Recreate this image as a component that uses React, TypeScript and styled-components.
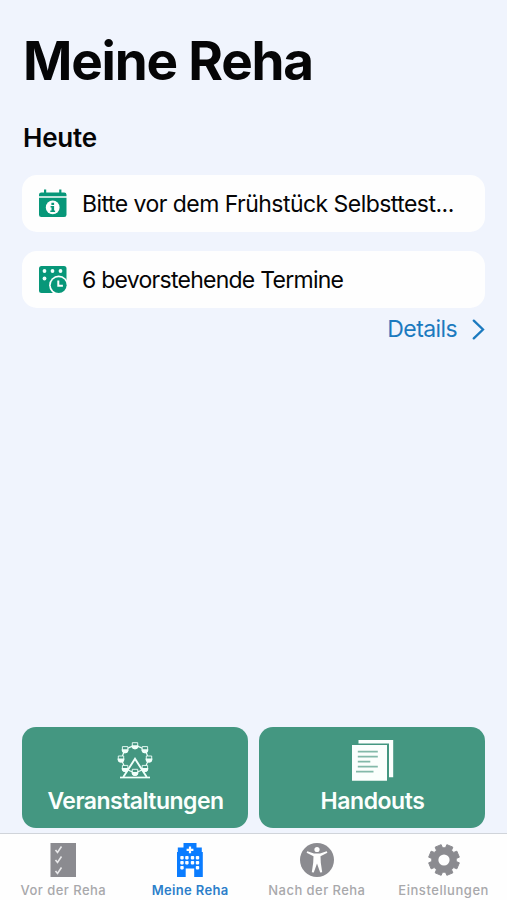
import React from "react";
import styled, { createGlobalStyle } from "styled-components";

const GlobalStyle = createGlobalStyle`
  * { box-sizing: border-box; }
  body { margin: 0; background: #f0f4fd; }
  button { border: 0; margin: 0; padding: 0; background: none; font: inherit; cursor: pointer; }
  svg { display: block; flex: none; }
`;

const Screen = styled.div`
  width: 100%;
  height: 900px;
  display: flex;
  flex-direction: column;
  overflow: hidden;
  background: #f0f4fd;
  color: #050506;
  font-family: Inter, "Liberation Sans", sans-serif;
`;

const Content = styled.main`
  flex: 1;
  display: flex;
  flex-direction: column;
  padding: 28px 22px 5px;
`;

const Title = styled.h1`
  margin: 0;
  padding: 1px 0 0 1px;
  font-size: 53px;
  line-height: 64px;
  font-weight: 700;
  letter-spacing: -1.2px;
`;

const Heading = styled.h2`
  margin: 29px 0 21px;
  padding-left: 1px;
  font-size: 26px;
  line-height: 32px;
  font-weight: 600;
  letter-spacing: -0.2px;
`;

const List = styled.div`
  display: flex;
  flex-direction: column;
  gap: 19px;
`;

const Row = styled.div`
  height: 57px;
  display: flex;
  align-items: center;
  gap: 15px;
  padding: 0 16px;
  border-radius: 15px;
  background: #fefefe;
`;

const RowText = styled.span<{ $spacing: number }>`
  font-size: 23px;
  line-height: 30px;
  letter-spacing: ${(p) => p.$spacing}px;
  white-space: nowrap;
`;

const Details = styled.button`
  align-self: flex-end;
  display: flex;
  align-items: center;
  gap: 15px;
  margin-top: 6px;
  color: #1c7abf;
  font-size: 23px;
  line-height: 30px;
  letter-spacing: -0.6px;
`;

const Tiles = styled.div`
  margin-top: auto;
  display: grid;
  grid-template-columns: 1fr 1fr;
  gap: 11px;
`;

const Tile = styled.button`
  height: 101px;
  display: flex;
  flex-direction: column;
  align-items: center;
  border-radius: 14px;
  background: #449781;
  color: #fbfffd;
`;

const TileIcon = styled.span`
  height: 59px;
  display: flex;
  padding-top: 13px;
`;

const TileLabel = styled.span<{ $spacing: number }>`
  padding-left: 1px;
  font-size: 23px;
  line-height: 30px;
  font-weight: 600;
  letter-spacing: ${(p) => p.$spacing}px;
`;

const TabBar = styled.nav`
  height: 67px;
  display: grid;
  grid-template-columns: repeat(4, 1fr);
  border-top: 1px solid #d0d4da;
  background: #fefefe;
`;

const Tab = styled.button<{ $active?: boolean }>`
  display: flex;
  flex-direction: column;
  align-items: center;
  padding-top: 8px;
  color: ${(p) => (p.$active ? "#0a7cff" : "#8b8b90")};
`;

const TabLabel = styled.span<{ $active?: boolean; $spacing: number }>`
  margin-top: 4px;
  font-size: 13px;
  line-height: 16px;
  font-weight: ${(p) => (p.$active ? 600 : 500)};
  letter-spacing: ${(p) => p.$spacing}px;
  color: ${(p) => (p.$active ? "#2c7fca" : "#a8a8ab")};
  white-space: nowrap;
`;

const green = "#079779";

const CalendarInfoIcon = () => (
  <svg width="29" height="29" viewBox="0 0 29 29">
    <path d="M1 7.300V5.800q0-2.300 2.300-2.300H6V.6h2.200v2.900h13V.6h2.200v2.900h2.800q2.300 0 2.300 2.300v1.500z" fill={green} />
    <path d="M1 8.800h27.500V25.700q0 2.300-2.300 2.300H3.300Q1 28 1 25.700z" fill={green} />
    <circle cx="14.700" cy="18.400" r="6.900" fill="#fefefe" />
    <path d="M13.400 13.800h2.700v2.300h-2.700zM12.600 17h3.500v4.500h1v1.400h-4.800v-1.400h1.200v-3.100h-.9z" fill={green} />
  </svg>
);

const CalendarClockIcon = () => (
  <svg width="29" height="29" viewBox="0 0 29 29">
    <rect x="1" y="1" width="27.500" height="27" rx="2.500" fill={green} />
    {[[6.500, 6], [14.500, 6], [22.500, 6], [6.500, 13.500]].map(([x, y]) => (
      <circle key={`${x}-${y}`} cx={x} cy={y} r="1.900" fill="#f2fffc" />
    ))}
    <circle cx="20.700" cy="20.200" r="9.600" fill="#fefefe" />
    <path d="M20 20h9v9h-9z" fill="#fefefe" />
    <circle cx="20.700" cy="20.200" r="7.900" fill={green} />
    <path d="M20.300 15.500v5.300h4.600" fill="none" stroke="#fefefe" strokeWidth="2" />
  </svg>
);

const ChevronIcon = () => (
  <svg width="13" height="21" viewBox="0 0 13 21">
    <path d="M1.800 1.600 11 10.500 1.800 19.400" fill="none" stroke="currentColor" strokeWidth="2.300" strokeLinecap="round" />
  </svg>
);

const cabins = Array.from({ length: 8 }, (_, i) => {
  const a = (i * Math.PI) / 4;
  return { x: 18 + 14 * Math.sin(a), y: 19 - 13.300 * Math.cos(a) };
});

const FerrisWheelIcon = () => (
  <svg width="36" height="40" viewBox="0 0 36 40" fill="none" stroke="#f0fffa">
    <circle cx="18" cy="19" r="12.800" strokeWidth="1.200" />
    {cabins.map(({ x, y }) => (
      <g key={`${x}-${y}`} transform={`translate(${x} ${y})`}>
        <path d="M-2.700-3h5.400V1q0 2-2 2h-1.400q-2 0-2-2z" fill="#449781" strokeWidth=".9" />
        <path d="M-3.400-.4h6.800q0 4-3.400 4T-3.400-.4z" fill="#f0fffa" stroke="none" />
      </g>
    ))}
    <path d="M6.300 37 18 18.800 29.700 37" strokeWidth="1.900" />
    <path d="M3 37.500h30" strokeWidth="1.700" />
  </svg>
);

const DocumentsIcon = () => (
  <svg width="43" height="43" viewBox="0 0 43 43">
    <path d="M7.500 0h34.700v37.300H7.500z" fill="#fbfffd" />
    <path d="M0 3.500h38v38H0z" fill="#449781" />
    <path d="M1 5h35v35.700H1z" fill="#fbfffd" />
    <path d="M6.800 11.700h20M6.800 16.700h20M6.800 21.700h12.500M6.800 26.700h20M5 31.700h17.500" stroke="#83b9a9" strokeWidth="1.800" />
  </svg>
);

const ChecklistIcon = () => (
  <svg width="36" height="36" viewBox="0 0 36 36">
    <path d="M5.500 1h25.500v34H5.500z" fill="currentColor" />
    <path d="m10.500 8 2 2.500 4-6M10.500 18l2 2.500 4-6M10.500 29l2 2.500 4-6" fill="none" stroke="#e8e8ea" strokeWidth="1.600" />
  </svg>
);

const HospitalIcon = () => (
  <svg width="36" height="36" viewBox="0 0 36 36">
    <path d="M11.500 1h13v4.500h5.300V10h1V35h-8.600v-8.500h-8.500V35H5V10h.8V5.500h5.700z" fill="currentColor" />
    <path d="M16.900 4.500h2.200v2.300h2.300V9h-2.300v2.300h-2.200V9h-2.300V6.800h2.300z" fill="#fefefe" />
    {[14, 19, 24].map((y) =>
      [8.300, 13.200, 18.800, 23.800].map((x, i) =>
        y === 24 && (i === 1 || i === 2) ? null : (
          <rect key={`${x}-${y}`} x={x} y={y} width="3.400" height="3.400" rx=".8" fill="#fefefe" />
        )
      )
    )}
  </svg>
);

const AccessibilityIcon = () => (
  <svg width="36" height="36" viewBox="0 0 36 36">
    <circle cx="18" cy="18" r="17" fill="currentColor" />
    <circle cx="18" cy="7.500" r="2.600" fill="#fefefe" />
    <path d="M8.300 9.200 15 11.600h6l6.700-2.400.7 1.500-6.900 3.600.3 6.500 1.400 9.400-2 .3-3.200-9.100-3.200 9.100-2-.3 1.400-9.400.3-6.500-6.900-3.600z" fill="#fefefe" />
  </svg>
);

const gearPath = Array.from({ length: 8 }, (_, i) => {
  const corners: [number, number][] = [[-15.500, 12.300], [-12, 15.600], [12, 15.600], [15.500, 12.300]];
  return corners
    .map(([offset, radius]) => {
      const a = ((i * 45 + 22.500 + offset) * Math.PI) / 180;
      return `${(18 + radius * Math.sin(a)).toFixed(2)} ${(18 - radius * Math.cos(a)).toFixed(2)}`;
    })
    .join("L");
}).join("L");

const GearIcon = () => (
  <svg width="36" height="36" viewBox="0 0 36 36">
    <path d={`M${gearPath}Z`} fill="currentColor" stroke="currentColor" strokeWidth="1" strokeLinejoin="round" />
    <circle cx="18" cy="18" r="5.600" fill="#fefefe" />
  </svg>
);

export default function App() {
  return (
    <Screen>
      <GlobalStyle />
      <Content>
        <Title>Meine Reha</Title>
        <Heading>Heute</Heading>
        <List>
          <Row>
            <CalendarInfoIcon />
            <RowText $spacing={-0.54}>Bitte vor dem Frühstück Selbsttest...</RowText>
          </Row>
          <Row>
            <CalendarClockIcon />
            <RowText $spacing={-0.74}>6 bevorstehende Termine</RowText>
          </Row>
        </List>
        <Details>
          Details
          <ChevronIcon />
        </Details>
        <Tiles>
          <Tile>
            <TileIcon><FerrisWheelIcon /></TileIcon>
            <TileLabel $spacing={-0.53}>Veranstaltungen</TileLabel>
          </Tile>
          <Tile>
            <TileIcon><DocumentsIcon /></TileIcon>
            <TileLabel $spacing={-0.45}>Handouts</TileLabel>
          </Tile>
        </Tiles>
      </Content>
      <TabBar>
        <Tab>
          <ChecklistIcon />
          <TabLabel $spacing={0.45}>Vor der Reha</TabLabel>
        </Tab>
        <Tab $active>
          <HospitalIcon />
          <TabLabel $active $spacing={0.35}>Meine Reha</TabLabel>
        </Tab>
        <Tab>
          <AccessibilityIcon />
          <TabLabel $spacing={0.45}>Nach der Reha</TabLabel>
        </Tab>
        <Tab>
          <GearIcon />
          <TabLabel $spacing={0.55}>Einstellungen</TabLabel>
        </Tab>
      </TabBar>
    </Screen>
  );
}
